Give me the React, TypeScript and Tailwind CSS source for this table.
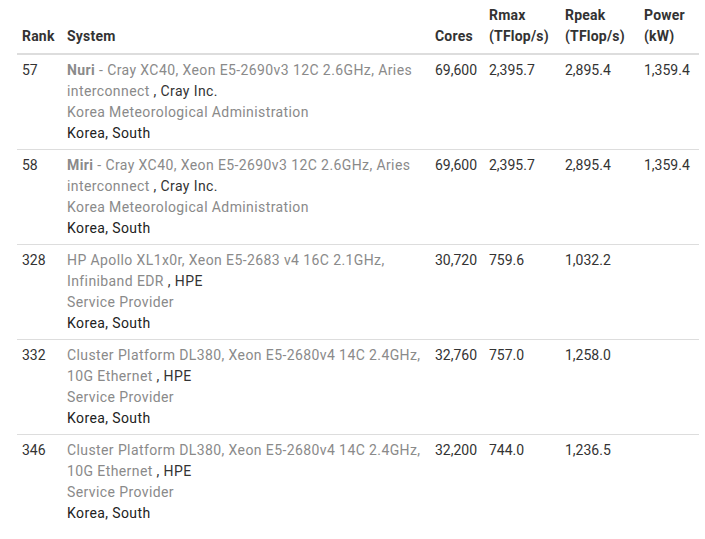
import React from "react";

type Row = {
  rank: string;
  name?: string;
  line1: string;
  line2: string;
  vendor: string;
  site: string;
  country: string;
  cores: string;
  rmax: string;
  rpeak: string;
  power: string;
};

const rows: Row[] = [
  {
    rank: "57",
    name: "Nuri",
    line1: " - Cray XC40, Xeon E5-2690v3 12C 2.6GHz, Aries",
    line2: "interconnect ",
    vendor: "Cray Inc.",
    site: "Korea Meteorological Administration",
    country: "Korea, South",
    cores: "69,600",
    rmax: "2,395.7",
    rpeak: "2,895.4",
    power: "1,359.4",
  },
  {
    rank: "58",
    name: "Miri",
    line1: " - Cray XC40, Xeon E5-2690v3 12C 2.6GHz, Aries",
    line2: "interconnect ",
    vendor: "Cray Inc.",
    site: "Korea Meteorological Administration",
    country: "Korea, South",
    cores: "69,600",
    rmax: "2,395.7",
    rpeak: "2,895.4",
    power: "1,359.4",
  },
  {
    rank: "328",
    line1: "HP Apollo XL1x0r, Xeon E5-2683 v4 16C 2.1GHz,",
    line2: "Infiniband EDR ",
    vendor: "HPE",
    site: "Service Provider",
    country: "Korea, South",
    cores: "30,720",
    rmax: "759.6",
    rpeak: "1,032.2",
    power: "",
  },
  {
    rank: "332",
    line1: "Cluster Platform DL380, Xeon E5-2680v4 14C 2.4GHz,",
    line2: "10G Ethernet ",
    vendor: "HPE",
    site: "Service Provider",
    country: "Korea, South",
    cores: "32,760",
    rmax: "757.0",
    rpeak: "1,258.0",
    power: "",
  },
  {
    rank: "346",
    line1: "Cluster Platform DL380, Xeon E5-2680v4 14C 2.4GHz,",
    line2: "10G Ethernet ",
    vendor: "HPE",
    site: "Service Provider",
    country: "Korea, South",
    cores: "32,200",
    rmax: "744.0",
    rpeak: "1,236.5",
    power: "",
  },
];

export default function App() {
  return (
    <div
      className="bg-white w-[705px] h-[539px] pl-[17px] pr-[6px] text-[14px] leading-[21px] text-[#333]"
      style={{ fontFamily: "Roboto, 'Liberation Sans', sans-serif" }}
    >
      <table className="w-[682px] table-fixed border-collapse">
        <colgroup>
          <col className="w-[45px]" />
          <col className="w-[368px]" />
          <col className="w-[54px]" />
          <col className="w-[76px]" />
          <col className="w-[79px]" />
          <col className="w-[60px]" />
        </colgroup>
        <thead>
          <tr className="border-b-2 border-[#dddddd] font-bold text-[#333] align-bottom text-left tracking-[0.2px]">
            <th className="pl-[5px] pt-[5px] pb-[6px]">Rank</th>
            <th className="pl-[5px] pt-[5px] pb-[6px]">System</th>
            <th className="pl-[5px] pt-[5px] pb-[6px]">Cores</th>
            <th className="pl-[5px] pt-[5px] pb-[6px]">
              Rmax
              <br />
              (TFlop/s)
            </th>
            <th className="pl-[5px] pt-[5px] pb-[6px]">
              Rpeak
              <br />
              (TFlop/s)
            </th>
            <th className="pl-[5px] pt-[5px] pb-[6px]">
              Power
              <br />
              (kW)
            </th>
          </tr>
        </thead>
        <tbody>
          {rows.map((r, i) => (
            <tr
              key={i}
              className={
                i < rows.length - 1
                  ? "border-b border-[#dddddd] align-top"
                  : "align-top"
              }
            >
              <td className="pl-[5px] pt-[5px] pb-[5px]">{r.rank}</td>
              <td className="pl-[5px] pt-[5px] pb-[5px] whitespace-nowrap tracking-[0.4px]">
                <span className="text-[#8a8a8a]">
                  {r.name && <b className="font-bold">{r.name}</b>}
                  {r.line1}
                  <br />
                  {r.line2}
                </span>
                <span className="text-[#333]">, {r.vendor}</span>
                <br />
                <span className="text-[#8a8a8a]">{r.site}</span>
                <br />
                <span className="text-[#222]">{r.country}</span>
              </td>
              <td className="pl-[5px] pt-[5px]">{r.cores}</td>
              <td className="pl-[5px] pt-[5px]">{r.rmax}</td>
              <td className="pl-[5px] pt-[5px]">{r.rpeak}</td>
              <td className="pl-[5px] pt-[5px]">{r.power}</td>
            </tr>
          ))}
        </tbody>
      </table>
    </div>
  );
}
